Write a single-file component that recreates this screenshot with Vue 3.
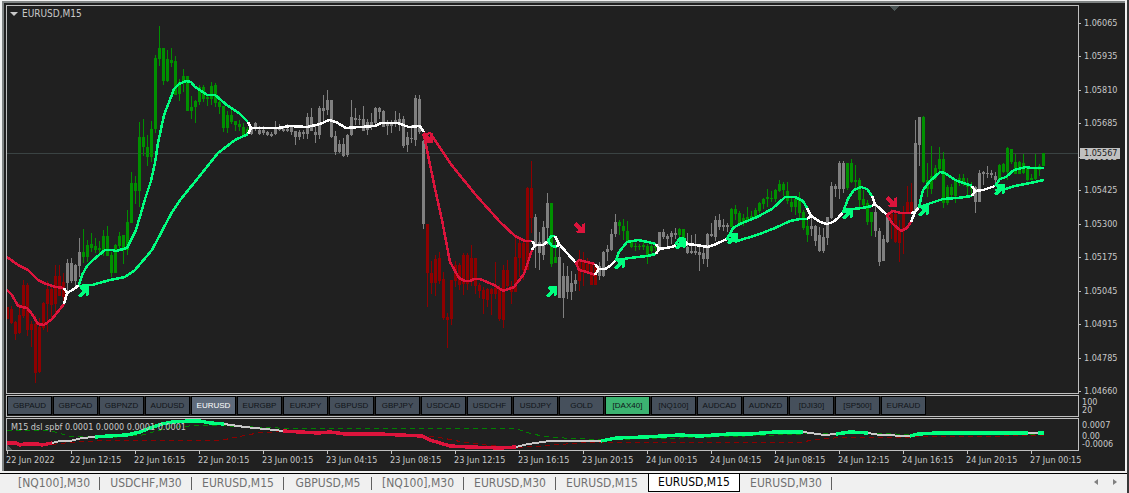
<script setup>
const GREEN = '#009000'
const RED = '#8e0000'
const GREY = '#808080'

// Consecutive candles, four pixels apart: [high, body top, body bottom, low]
const runs = [
  [RED, [[307,307,319,319],[306,309,323,324],[321,322,334,340],[303,315,333,334],[280,285,316,318],[283,285,330,336],[321,324,330,347],[315,324,373,383],[318,327,372,373],[302,303,328,330],[281,289,304,332],[287,289,305,320],[265,276,304,313],[265,276,296,296],[273,282,297,304]]],
  [GREY, [[259,263,283,293],[258,263,281,283],[264,265,281,288],[238,252,266,277]]],
  [GREEN, [[229,252,257,263],[240,245,257,262],[233,244,248,252],[238,246,250,253],[241,248,250,253],[230,236,250,256],[226,236,256,256],[252,255,273,277],[244,245,273,273],[232,236,246,250],[235,235,248,264],[210,222,250,255],[172,183,223,223],[176,183,191,204],[122,137,191,207],[119,137,147,156],[135,147,157,166],[121,129,157,162],[55,58,129,133],[26,48,59,66],[48,48,81,85],[50,59,81,82],[48,60,63,67],[56,61,95,95],[79,82,94,101],[69,76,81,92],[76,76,111,111],[96,107,111,119],[100,101,107,123],[85,87,102,105],[85,87,99,102],[94,97,99,106],[82,86,99,105],[83,85,103,107],[96,102,107,114],[106,106,128,132],[111,115,128,133],[110,115,122,124],[121,121,125,131],[120,124,127,131],[123,127,135,135],[127,129,134,134]]],
  [GREY, [[127,129,134,135],[122,123,129,131],[126,130,134,135],[126,130,133,135],[131,132,135,136],[132,134,136,137],[121,128,134,135],[124,128,130,131],[126,129,131,132],[124,129,131,132],[126,126,132,135],[131,131,137,145],[130,132,137,140],[130,132,134,139],[113,117,134,139],[108,117,131,131],[125,132,135,143],[106,108,135,139],[95,108,111,124],[90,100,110,115],[100,100,137,138],[131,136,152,155],[140,144,152,153],[138,144,156,157],[134,135,155,157],[100,117,135,136],[108,118,120,125],[115,119,120,125],[106,119,131,131],[119,122,130,135],[113,122,126,130],[107,108,123,126],[107,108,112,119],[110,111,127,127],[120,122,126,135],[120,123,126,133],[111,120,123,127],[113,119,123,131],[116,119,146,148],[132,137,145,152],[125,138,139,143],[95,98,140,146],[95,99,132,134],[140,141,224,229]]],
  [RED, [[224,224,273,307],[261,273,283,294],[255,259,283,296],[252,258,281,284],[272,279,318,320],[313,317,320,348],[280,280,319,325],[261,265,281,287],[263,265,285,290],[253,255,284,295],[253,255,284,290],[245,258,282,286],[258,258,286,294],[283,285,291,298],[287,290,299,314],[288,289,300,307],[288,289,294,315],[262,288,294,299],[285,289,319,321],[265,270,320,328],[260,270,286,290],[281,286,292,304],[237,257,292,292],[239,243,258,277],[239,243,270,280],[187,188,270,270],[161,188,218,233]]],
  [GREY, [[214,217,247,268],[232,242,253,270],[221,227,255,260],[193,203,228,245]]],
  [GREEN, [[203,203,264,267],[241,257,263,263]]],
  [GREY, [[247,257,298,298],[263,276,298,318],[266,276,292,299],[271,283,292,300],[274,280,284,291]]],
  [RED, [[250,261,281,291],[252,262,272,286],[258,264,272,274],[262,264,285,285],[264,264,285,285]]],
  [GREY, [[262,266,276,280],[251,252,276,277],[245,249,252,261],[229,234,250,251],[214,222,234,237]]],
  [GREEN, [[220,222,226,235],[219,226,231,240],[221,231,242,242],[241,242,247,248],[243,246,247,251],[244,246,247,250],[240,245,247,250],[244,246,256,264],[244,246,251,254],[245,246,248,254]]],
  [GREY, [[232,232,247,249],[229,232,237,239],[234,236,239,249],[231,233,237,244],[228,233,235,239]]],
  [GREEN, [[228,229,235,237],[229,229,245,247]]],
  [GREY, [[233,247,253,254],[235,251,253,254],[234,251,253,255],[247,252,255,271],[246,253,259,264],[233,234,259,267],[223,234,236,237],[216,220,237,241],[214,220,227,230],[219,225,227,231],[223,225,227,232]]],
  [GREEN, [[208,209,227,227],[205,209,214,220],[211,213,225,226],[214,218,223,226],[207,217,220,222],[211,216,219,221],[208,210,218,219],[202,203,211,213],[198,199,204,209],[189,197,199,207],[191,198,199,202],[189,190,199,202],[180,184,191,192],[182,184,190,196],[182,191,201,204],[196,202,207,212],[198,199,207,215],[192,199,213,218],[210,212,228,230],[218,226,235,242]]],
  [GREY, [[216,226,229,236],[225,226,241,246],[227,235,251,252],[228,237,251,253],[217,217,238,245],[182,186,218,219],[184,186,189,197],[161,163,189,199],[161,163,189,193]]],
  [GREEN, [[163,163,188,190],[159,163,182,183],[165,180,182,191],[178,180,200,208],[190,199,205,207],[200,203,222,225],[212,212,222,236]]],
  [GREY, [[206,212,231,237],[228,231,262,266],[235,239,261,261],[213,215,242,243]]],
  [RED, [[209,214,220,239],[212,214,242,243],[220,230,243,262],[206,212,230,254],[186,202,212,214],[183,202,212,213]]],
  [GREY, [[120,143,212,214],[117,117,145,166]]],
  [GREEN, [[116,117,182,183],[163,180,189,197],[146,176,189,194],[165,168,178,180],[147,159,169,171],[152,159,203,208],[185,187,203,205],[184,187,195,200],[179,181,196,203],[174,178,182,186],[174,178,182,186],[178,184,187,196],[182,186,189,194]]],
  [GREY, [[186,187,202,213],[170,173,202,202],[171,172,174,185],[166,173,174,178],[170,173,175,178],[172,176,180,185]]],
  [GREEN, [[164,165,179,180],[163,164,172,173],[147,148,172,180],[149,149,162,164],[154,162,174,174],[161,162,174,174],[154,163,173,174],[166,167,180,181],[174,178,180,180],[154,169,179,180],[164,166,170,176],[153,153,166,166]]],
]

let next = 7
const candles = runs.flatMap(([color, list]) =>
  list.map(([h, t, b, l]) => {
    const x = next
    next += 4
    return { x, color, h, wick: l - h, t, body: Math.max(b - t, 1) }
  }),
)

const bands = [
  ['down', '7,257 18,265 28,270 38,280 46,284 56,287 64,288'],
  ['flat', '64,288 67,293'],
  ['down', '7,290 12,295 18,306 27,308 32,314 38,324 44,325 52,319 64,304'],
  ['flat', '64,304 67,293 74,289 79,285'],
  ['up', '79,285 82,275 87,266 93,260 105,250 112,250 116,251 127,248 131,240 136,230 141,213 145,199 151,181 155,163 158,143 164,115 171,97 174,89 179,84 186,81 191,82 195,87 207,95 215,95 228,106 240,114 248,122'],
  ['flat', '248,122 251,128 248,134'],
  ['up', '79,286 92,285 110,280 125,277 135,270 152,250 171,214 181,199 198,178 218,153 235,140 248,134'],
  ['flat', '251,128 278,128 290,126 307,127 320,124 329,120 336,122 346,128 360,127 375,126 381,123 398,123 403,125 409,127 420,126 424,132'],
  ['down', '424,135 427,150 434,184 442,220 450,262 459,278 465,281 470,281 474,279 480,279 494,285 503,291 514,287 524,274 532,250'],
  ['down', '424,135 430,133 435,140 450,163 475,194 500,222 515,236 525,241 532,241'],
  ['flat', '532,241 535,245 532,250'],
  ['flat', '535,245 543,245 548,241'],
  ['up', '555,236 551,236 548,241 552,246 557,247'],
  ['flat', '555,236 559,244 557,247'],
  ['flat', '559,244 567,253 576,263'],
  ['down', '595,264 587,262 579,260 576,263 579,270 587,272 595,275'],
  ['flat', '595,264 599,269 595,275'],
  ['flat', '599,269 605,269 610,266 616,260'],
  ['up', '656,244 648,242 638,240 627,242 619,252 616,260 630,258 647,256 656,254'],
  ['flat', '656,244 659,249 656,254'],
  ['flat', '659,249 672,247 676,245'],
  ['up', '684,238 680,238 676,244 684,246'],
  ['flat', '684,239 687,244 684,246'],
  ['flat', '687,244 696,245 708,247 716,244 727,239'],
  ['up', '807,208 803,201 795,197 785,197 772,209 757,217 740,224 733,228 727,239 737,241 757,235 775,228 790,221 800,219 807,219'],
  ['flat', '807,208 811,216 807,219'],
  ['flat', '811,216 820,222 827,224 833,222 838,218 843,212'],
  ['up', '872,196 867,189 861,187 854,190 848,199 843,212 853,209 862,208 872,206'],
  ['flat', '872,196 875,204 872,206'],
  ['flat', '875,204 887,215'],
  ['down', '911,213 901,213 893,211 887,215 893,224 901,231 907,228 911,222'],
  ['flat', '911,213 915,212 911,222'],
  ['flat', '915,212 919,207'],
  ['up', '972,186 955,180 945,173 940,172 930,181 923,190 919,207 931,203 943,199 957,198 972,196'],
  ['flat', '972,186 975,191 972,196'],
  ['flat', '975,191 983,190 995,186'],
  ['up', '995,186 1000,179 1006,177 1014,170 1026,167 1031,168 1044,168'],
  ['up', '995,190 1005,189 1015,186 1030,183 1044,180'],
]

const buys = [[78, 286], [546, 286], [614, 258], [675, 238], [727, 233], [842, 208], [918, 205], [994, 184]]
const sells = [[422, 132], [574, 222], [886, 196]]

const osc = [
  ['down', '7,443 16,443 20,445 24,444 38,444 42,445 52,443'],
  ['calm', '52,443 60,441 70,441 82,438 95,437'],
  ['up', '95,437 108,436 127,435 140,432 150,428 162,424 172,422 190,421 200,421 210,423 224,424'],
  ['calm', '224,424 245,427 265,429 283,431'],
  ['down', '283,431 300,432 318,433 330,432 345,434 380,434 400,435 422,436 430,440 450,446 470,447 500,448 516,447'],
  ['calm', '516,447 528,444 550,441 601,441'],
  ['up', '601,441 616,438 645,437 680,435 700,436 730,434 750,434 775,432 803,432'],
  ['calm', '803,432 825,435 836,434'],
  ['up', '836,434 850,432 868,433'],
  ['calm', '868,433 880,435 910,436'],
  ['up', '910,436 918,434 937,433 1028,433'],
  ['calm', '1028,433 1038,433'],
  ['up', '1038,433 1044,433'],
]

const prices = ['1.06065', '1.05935', '1.05810', '1.05685', '1.05555', '1.05425', '1.05300', '1.05175', '1.05045', '1.04915', '1.04785', '1.04660']
const times = ['22 Jun 2022', '22 Jun 12:15', '22 Jun 16:15', '22 Jun 20:15', '23 Jun 00:15', '23 Jun 04:15', '23 Jun 08:15', '23 Jun 12:15', '23 Jun 16:15', '23 Jun 20:15', '24 Jun 00:15', '24 Jun 04:15', '24 Jun 08:15', '24 Jun 12:15', '24 Jun 16:15', '24 Jun 20:15', '27 Jun 00:15']
const symbols = ['GBPAUD', 'GBPCAD', 'GBPNZD', 'AUDUSD', 'EURUSD', 'EURGBP', 'EURJPY', 'GBPUSD', 'GBPJPY', 'USDCAD', 'USDCHF', 'USDJPY', 'GOLD', '[DAX40]', '[NQ100]', 'AUDCAD', 'AUDNZD', '[DJI30]', '[SP500]', 'EURAUD']
const tabs = ['[NQ100],M30', 'USDCHF,M30', 'EURUSD,M15', 'GBPUSD,M5', '[NQ100],M30', 'EURUSD,M30', 'EURUSD,M15', 'EURUSD,M15', 'EURUSD,M30']
const activeTab = 7
</script>

<template>
  <div class="app">
    <main class="window">
      <section class="panel price">
        <svg class="plot" viewBox="7 6 1071 387" preserveAspectRatio="none" shape-rendering="crispEdges">
          <rect x="7" y="153" width="1071" height="1" fill="#3a4343" />
          <path d="M890 6h9l-4.500 5z" fill="#4b5555" />
          <g v-for="c in candles" :key="c.x" :fill="c.color">
            <rect :x="c.x" :y="c.h" width="1" :height="c.wick" />
            <rect :x="c.x - 1" :y="c.t" width="3" :height="c.body" />
          </g>
          <polyline v-for="(b, i) in bands" :key="i" :class="['band', b[0]]" :points="b[1]" />
          <path
            v-for="(a, i) in buys" :key="'b' + i" class="buy"
            :transform="`translate(${a[0]} ${a[1]})`"
            d="M2 1L4 0H11V9L8 10V6L3 11H1L0 9L4 5L2 3Z"
          />
          <path
            v-for="(a, i) in sells" :key="'s' + i" class="sell"
            :transform="`translate(${a[0]} ${a[1]})`"
            d="M0 2L2 0L8 5V2L11 1V11H3L2 9L5 8L0 4Z"
          />
        </svg>
        <h1 class="title"><span class="caret"></span>EURUSD,M15</h1>
      </section>
      <div class="scale prices">
        <span v-for="p in prices" :key="p" class="mark">{{ p }}</span>
        <span class="current">1.05567</span>
      </div>

      <nav class="panel symbols">
        <button
          v-for="s in symbols" :key="s" type="button" class="symbol"
          :class="{ selected: s === 'EURUSD', alert: s === '[DAX40]' }"
        >{{ s }}</button>
      </nav>
      <div class="scale levels"><span>100</span><span>20</span></div>

      <section class="panel osc">
        <svg class="plot" viewBox="7 419 1071 31" preserveAspectRatio="none" shape-rendering="crispEdges">
          <polyline class="dash high" points="7,430.500 50,430.500 70,436.500 110,437.500 140,435.500 155,431.500 172,427.500 195,425.500 215,425.500 270,427.500 285,428.500 516,428.500 530,433.500 545,436.500 570,438.500 600,439.500 660,438.500 700,437.500 820,433.500 880,433.500 912,434.500 1044,434.500" />
          <polyline class="dash low" points="7,444.500 52,444.500 70,442.500 85,441.500 110,440.500 220,440.500 235,437.500 260,432.500 285,431.500 330,433.500 425,435.500 445,438.500 465,442.500 490,445.500 515,447.500 535,446.500 560,444.500 585,442.500 800,442.500 815,439.500 840,437.500 870,437.500 1044,435.500" />
          <polyline v-for="(o, i) in osc" :key="i" :class="['line', o[0]]" :points="o[1]" />
          <path d="M7 445l5 5h-5z" fill="#4b5555" />
        </svg>
        <p class="caption">M15 dsl spbf 0.0001 0.0000 0.0001 0.0001</p>
      </section>
      <div class="scale range"><span class="top">0.0007</span><span>0.00</span><span>-0.0006</span></div>

      <div class="times">
        <span v-for="t in times" :key="t" class="time">{{ t }}</span>
      </div>
    </main>

    <footer class="tabs">
      <button
        v-for="(t, i) in tabs" :key="i" type="button" class="tab"
        :class="{ active: i === activeTab, before: i === activeTab - 1, short: t === 'GBPUSD,M5' }"
      >{{ t }}</button>
      <span class="pager">
        <button type="button" aria-label="Previous"><svg width="4" height="6"><path d="M4 0V6L0 3Z" /></svg></button>
        <button type="button" aria-label="Next"><svg width="4" height="6"><path d="M0 0V6L4 3Z" /></svg></button>
      </span>
    </footer>
  </div>
</template>

<style>
body {
  margin: 0;
  background: #202020;
}
</style>

<style scoped>
.app {
  box-sizing: border-box;
  display: flex;
  flex-direction: column;
  min-height: 100vh;
  border-right: 2px solid #383838;
  background: #f0f0f0;
  font-family: "DejaVu Sans Condensed", "DejaVu Sans", sans-serif;
  overflow: hidden;
}
.window {
  flex: 1;
  display: grid;
  grid-template-columns: minmax(0, 1fr) 46px;
  grid-template-rows: minmax(300px, 1fr) 22px 33px 19px;
  row-gap: 1px;
  margin: 1px 2px 2px 2px;
  padding: 2px 0 0 2px;
  border-top: 2px solid #808484;
  border-left: 2px solid #808484;
  background: #202020;
  color: #c8c8c8;
}
.panel {
  position: relative;
  box-sizing: border-box;
  border: 1px solid #c0c0c0;
  min-width: 0;
  min-height: 0;
}
.plot {
  position: absolute;
  inset: 0;
  width: 100%;
  height: 100%;
}
.band {
  fill: none;
  stroke-width: 2.5;
  stroke-linejoin: round;
}
.up { stroke: #00ff7f; }
.down { stroke: #dc143c; }
.flat { stroke: #fff; }
.calm { stroke: #c8c8c8; }
.buy { fill: #00ff7f; }
.sell { fill: #dc143c; }
.line {
  fill: none;
  stroke-width: 3.5;
}
.line.calm { stroke-width: 2; }
.dash {
  fill: none;
  stroke-width: 1;
  stroke-dasharray: 5 4;
}
.high { stroke: #008000; }
.low { stroke: #8b0000; }
.title {
  position: relative;
  display: flex;
  align-items: center;
  gap: 4px;
  margin: 0;
  padding: 2px 3px;
  font-size: 10px;
  font-weight: 400;
  line-height: 12px;
}
.caret {
  border: 4px solid transparent;
  border-top-color: #c8c8c8;
  border-bottom: 0;
}
.scale {
  position: relative;
  font-size: 9px;
}
.prices {
  display: flex;
  flex-direction: column;
  justify-content: space-between;
  margin-bottom: -4px;
  padding-top: 12px;
}
.mark {
  display: flex;
  align-items: center;
  gap: 3px;
  line-height: 13px;
}
.mark::before {
  content: "";
  width: 2px;
  height: 1px;
  background: #c0c0c0;
}
.current {
  position: absolute;
  top: 143px;
  left: 1px;
  width: 36px;
  padding-left: 4px;
  background: #c0c0c0;
  color: #202020;
  line-height: 11px;
}
.levels,
.range {
  display: flex;
  flex-direction: column;
  padding-top: 3px;
  padding-left: 3px;
  line-height: 8px;
}
.top { margin-bottom: 3px; }
.symbols {
  display: flex;
  align-items: flex-start;
  gap: 1px;
  overflow: hidden;
}
.symbol {
  flex: 0 0 45px;
  box-sizing: border-box;
  height: 19px;
  padding: 0;
  border: 1px solid #000;
  background: #46505c;
  color: #101418;
  font: 8px/17px "Liberation Sans", Arial, sans-serif;
}
.selected {
  background: #5f6b7b;
  color: #fff;
}
.alert { background: #3cb371; }
.caption {
  position: relative;
  margin: 0;
  padding: 2px 4px;
  font-size: 9px;
  line-height: 12px;
  white-space: nowrap;
}
.times {
  display: flex;
  margin-top: -1px;
}
.time {
  position: relative;
  flex: 0 0 5.9646%;
  padding-top: 3px;
  font-size: 9px;
  line-height: 12px;
  white-space: nowrap;
}
.time::before {
  content: "";
  position: absolute;
  top: 0;
  left: 1px;
  width: 1px;
  height: 3px;
  background: #c0c0c0;
}
.tabs {
  display: flex;
  align-items: flex-start;
  height: 19px;
  padding-left: 8px;
  border-top: 1px solid #000;
}
.tab {
  position: relative;
  flex: 0 0 92px;
  height: 18px;
  padding: 0;
  border: 0;
  background: none;
  color: #707070;
  font: 12px/17px "DejaVu Sans Condensed", "DejaVu Sans", sans-serif;
}
.tab::after {
  content: "";
  position: absolute;
  top: 3px;
  right: 0;
  width: 1px;
  height: 13px;
  background: #606060;
}
.short { flex-basis: 88px; }
.before::after,
.active::after { display: none; }
.active {
  border: 1px solid #000;
  border-top: 0;
  background: #fff;
  color: #000;
}
.pager {
  display: flex;
  gap: 15px;
  margin-left: auto;
  padding: 5px 10px 0 0;
}
.pager button {
  padding: 0;
  border: 0;
  background: none;
  line-height: 6px;
}
.pager svg { display: block; }
.pager path { fill: #808080; }
</style>
